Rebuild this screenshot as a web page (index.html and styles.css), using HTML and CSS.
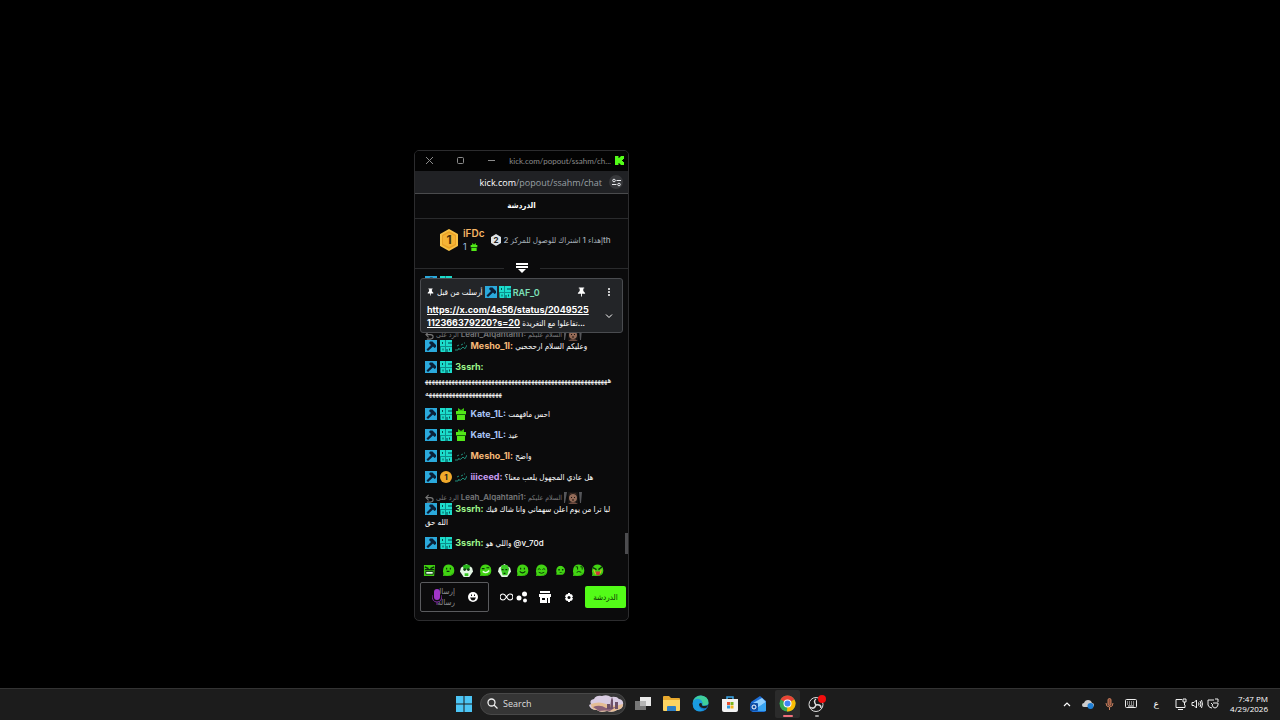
FILE: index.html
```
<!DOCTYPE html>
<html lang="en">
<head>
    <meta charset="UTF-8">
    <meta name="viewport" content="width=device-width, initial-scale=1.0">
    <title>Desktop</title>
    <link rel="stylesheet" href="styles.css">
</head>
<body>
    <!-- Shared icons -->
    <svg class="sprite" aria-hidden="true">
        <symbol id="mod" viewBox="0 0 12 12">
            <rect width="12" height="12" fill="#2ba9dc"/>
            <path d="M5 1.500h2.500L11 5v2L9.500 8 8 6.500 3 11 1.500 9.500 6 5 4 3z" fill="#0b2038"/>
        </symbol>
        <symbol id="og" viewBox="0 0 12 12">
            <rect width="12" height="12" rx="1" fill="#0c8f8c"/>
            <path d="M0 0h5v6H0zM6 0h6v2H8v2h4v2H6zM1 7h4v5H1zM6 7h6v5H8V9H6z" fill="#1cdccb"/>
            <path d="M2 2h1v2H2zM2.500 8.500h1v2h-1zM9 8.500h1v2H9z" fill="#04504f"/>
        </symbol>
        <symbol id="gift" viewBox="0 0 12 12">
            <path d="M1 3h10v3H1zM2 7h8v5H2z" fill="#53e818"/>
            <path d="M3 0l3 2 3-2v3H3z" fill="#3cc40e"/>
            <path d="M1 6h10v1H1z" fill="#146a08"/>
        </symbol>
        <symbol id="sub" viewBox="0 0 12 12">
            <path d="M0 10h3l1-2M4 9q2 1 3-1t2 0 2-1l1-2M2 6l2-1M6 5l2-1M9 3h1" fill="none" stroke="#1f8a78" stroke-width="1"/>
        </symbol>
        <symbol id="pin" viewBox="0 0 10 10">
            <path d="M2 0h6v1H7v3l2 2v1H5.500v3h-1V7H1V6l2-2V1H2z" fill="#fff"/>
        </symbol>
        <symbol id="reply" viewBox="0 0 10 10">
            <path d="M4 1L1 4l3 3M1 4h5q3 0 3 2.500T6 9H2" fill="none" stroke="#777" stroke-width="1.200"/>
        </symbol>
        <symbol id="curtain" viewBox="0 0 18 12">
            <path d="M0 0h3L1 11H0zM15 0h3l-1 11h-1z" fill="#55565a"/>
            <path d="M4 0h10v11H4z" fill="#161413"/>
            <circle cx="9" cy="6" r="4" fill="#936a57"/>
            <path d="M5 4q4-5 8 0l-1-3H6z" fill="#3b2a24"/>
            <path d="M7 5.500h1M10 5.500h1M8 8h2" stroke="#1c100d"/>
            <path d="M4 12q5-4 10 0z" fill="#6e4c40"/>
        </symbol>
        <symbol id="blob" viewBox="0 0 14 14">
            <path d="M3 2q4-3 8 0 3 2 2 7-1 4-6 4H1q1-2 0-5 0-4 2-6z" fill="#42d413"/>
            <path d="M3 12q6 2 9-3-1 4-5 4H1z" fill="#2a9d0a"/>
        </symbol>
    </svg>

    <main class="desktop">
        <section class="window">
            <header class="titlebar">
                <button aria-label="Close"><svg width="9" height="9" viewBox="0 0 9 9"><path d="M1 1l7 7M8 1L1 8"/></svg></button>
                <button aria-label="Maximize"><svg width="9" height="9" viewBox="0 0 9 9"><rect x="1.500" y="1.500" width="6" height="6" rx="1"/></svg></button>
                <button aria-label="Minimize"><svg width="9" height="9" viewBox="0 0 9 9"><path d="M1 4.500h7"/></svg></button>
                <span class="title">kick.com/popout/ssahm/ch...</span>
                <svg width="9" height="9" viewBox="0 0 9 9"><path d="M0 0h3.500v2h1V1h1V0H9v3H8v1H7v1h1v1h1v3H5.500V8h-1V7h-1v2H0z" fill="#53fc18"/></svg>
            </header>
            <div class="address">
                <span class="url"><b>kick.com</b>/popout/ssahm/chat</span>
                <button class="site" aria-label="Site information">
                    <svg width="9" height="9" viewBox="0 0 9 9" fill="none" stroke="#e8eaed"><circle cx="2" cy="2.500" r="1.300"/><path d="M4.500 2.500H9M0 6.500h4.500"/><circle cx="7" cy="6.500" r="1.300"/></svg>
                </button>
            </div>
            <h1 class="chat-title" lang="ar">الدردشة</h1>

            <div class="leaders">
                <svg width="20" height="22" viewBox="0 0 20 22">
                    <path d="M10 1l8 4.500v11L10 21l-8-4.500v-11z" fill="#e9a227" stroke="#f7c146" stroke-width="2" stroke-linejoin="round"/>
                    <path d="M10 4l6 3v8l-6 3-6-3V7z" fill="#f5b335"/>
                    <text x="10" y="15" class="rank">1</text>
                </svg>
                <div class="leader">
                    <strong>iFDc</strong>
                    <span>1 <svg width="8" height="8"><use href="#gift"/></svg></span>
                </div>
                <svg class="medal" width="10" height="12" viewBox="0 0 10 12">
                    <path d="M5 0l5 3v6l-5 3-5-3V3z" fill="#dfe3e6"/>
                    <text x="5" y="9" class="rank small">2</text>
                </svg>
                <p class="goal" dir="rtl" lang="ar">thإهداء 1 اشتراك للوصول للمركز 2</p>
            </div>
            <div class="divider">
                <button aria-label="Expand">
                    <svg width="12" height="10" viewBox="0 0 12 10"><path d="M0 0h12v2H0zM0 3h12v2H0zM2 6h8L6 10z" fill="#fff"/></svg>
                </button>
            </div>

            <div class="chat">
                <aside class="pinned">
                    <div class="pinned-top">
                        <svg width="7" height="8"><use href="#pin"/></svg>
                        <span class="by" lang="ar">أرسلت من قبل</span>
                        <svg class="badge"><use href="#mod"/></svg>
                        <svg class="badge"><use href="#og"/></svg>
                        <strong>RAF_0</strong>
                        <button class="unpin" aria-label="Unpin"><svg width="9" height="10"><use href="#pin"/></svg></button>
                        <button aria-label="More"><svg width="8" height="8" viewBox="0 0 8 8" fill="#fff"><circle cx="4" cy="1" r="1"/><circle cx="4" cy="4" r="1"/><circle cx="4" cy="7" r="1"/></svg></button>
                    </div>
                    <div class="pinned-body">
                        <p><a href="https://x.com/4e56/status/2049525112366379220?s=20">https://x.com/4e56/status/2049525112366379220?s=20</a> <span lang="ar">تفاعلوا مع التغريدة...</span></p>
                        <button aria-label="Show more"><svg width="8" height="8" viewBox="0 0 8 8"><path d="M1 2.500l3 3 3-3" fill="none" stroke="#fff"/></svg></button>
                    </div>
                </aside>

                <ul class="messages">
                    <li>
                        <svg class="badge"><use href="#mod"/></svg>
                        <svg class="badge"><use href="#og"/></svg>
                    </li>
                    <li class="gap"></li>
                    <li>
                        <div class="reply"><svg width="9" height="9"><use href="#reply"/></svg> الرد على <b>Leah_Alqahtani1:</b> السلام عليكم <svg width="18" height="12"><use href="#curtain"/></svg></div>
                        <svg class="badge"><use href="#mod"/></svg>
                        <svg class="badge"><use href="#og"/></svg>
                        <svg class="badge"><use href="#sub"/></svg>
                        <b class="orange">Mesho_1l:</b> وعليكم السلام ارحححبي
                    </li>
                    <li>
                        <svg class="badge"><use href="#mod"/></svg>
                        <svg class="badge"><use href="#og"/></svg>
                        <b class="green">3ssrh:</b>
                        <span class="laugh">ههههههههههههههههههههههههههههههههههههههههههههههههههههههههههههههههههههههههههههههه</span>
                    </li>
                    <li>
                        <svg class="badge"><use href="#mod"/></svg>
                        <svg class="badge"><use href="#og"/></svg>
                        <svg class="badge"><use href="#gift"/></svg>
                        <b class="blue">Kate_1L:</b> احس مافهمت
                    </li>
                    <li>
                        <svg class="badge"><use href="#mod"/></svg>
                        <svg class="badge"><use href="#og"/></svg>
                        <svg class="badge"><use href="#gift"/></svg>
                        <b class="blue">Kate_1L:</b> عيد
                    </li>
                    <li>
                        <svg class="badge"><use href="#mod"/></svg>
                        <svg class="badge"><use href="#og"/></svg>
                        <svg class="badge"><use href="#sub"/></svg>
                        <b class="orange">Mesho_1l:</b> واضح
                    </li>
                    <li>
                        <svg class="badge"><use href="#mod"/></svg>
                        <svg class="badge" viewBox="0 0 12 12"><circle cx="6" cy="6" r="6" fill="#f0a92b"/><text x="6" y="9" class="rank small">1</text></svg>
                        <svg class="badge"><use href="#sub"/></svg>
                        <b class="purple">iiiceed:</b> هل عادي المجهول يلعب معنا؟
                    </li>
                    <li>
                        <div class="reply"><svg width="9" height="9"><use href="#reply"/></svg> الرد على <b>Leah_Alqahtani1:</b> السلام عليكم <svg width="18" height="12"><use href="#curtain"/></svg></div>
                        <svg class="badge"><use href="#mod"/></svg>
                        <svg class="badge"><use href="#og"/></svg>
                        <b class="green">3ssrh:</b> لبا ترا من يوم اعلن سهماني وانا شاك فيك الله حق
                    </li>
                    <li>
                        <svg class="badge"><use href="#mod"/></svg>
                        <svg class="badge"><use href="#og"/></svg>
                        <b class="green">3ssrh:</b> واللي هو <span dir="ltr">@v_70d</span>
                    </li>
                </ul>
                <div class="thumb"></div>
            </div>

            <div class="emotes">
                <button aria-label="Angry"><svg viewBox="0 0 14 14"><path d="M1 1h12l-1 12H1z" fill="#3fd010"/><path d="M2 3l4 2M12 3L8 5M2 6h10" stroke="#08280a" stroke-width="1.500"/><path d="M3 8h8v3H3z" fill="#eaffea" stroke="#08280a"/></svg></button>
                <button aria-label="Thinking"><svg viewBox="0 0 14 14"><use href="#blob"/><path d="M5 4v2M9 4v2M5 8h3" stroke="#0a3307" stroke-width="1.200"/></svg></button>
                <button aria-label="Shock"><svg viewBox="0 0 14 14"><path d="M7 0l6 4 1 4-4 6H4L0 8l1-4z" fill="#e4f7e4"/><path d="M3 2q4-3 8 0l-1 4H4z" fill="#27b51a"/><circle cx="5" cy="6" r="1.500" fill="#123f16"/><circle cx="9" cy="6" r="1.500" fill="#123f16"/><path d="M5 10h4v3H5z" fill="#35c721"/></svg></button>
                <button aria-label="Smirk"><svg viewBox="0 0 14 14"><use href="#blob"/><path d="M3 5h3M8 4h3" stroke="#0a3307" stroke-width="1.200"/><path d="M4 8q4 3 7-1" fill="none" stroke="#eaffea" stroke-width="1.500"/></svg></button>
                <button aria-label="Cry"><svg viewBox="0 0 14 14"><path d="M7 0l6 4 1 4-4 6H4L0 8l1-4z" fill="#e4f7e4"/><path d="M4 1h6l2 4-2 7H5L3 5z" fill="#3ccb25"/><path d="M4 6h2M8 6h2M6 10h2" stroke="#0a3307" stroke-width="1.400"/></svg></button>
                <button aria-label="Smile"><svg viewBox="0 0 14 14"><use href="#blob"/><path d="M5 4v2M9 4v2M4 8q3 3 6 0" fill="none" stroke="#0a3307" stroke-width="1.200"/></svg></button>
                <button aria-label="Content"><svg viewBox="0 0 14 14"><use href="#blob"/><path d="M3 6q1.500-2 3 0M8 6q1.500-2 3 0M4 9q3 2 6 0" fill="none" stroke="#0a3307"/></svg></button>
                <button aria-label="Small"><svg viewBox="-2 -2 18 18"><use href="#blob" width="14" height="14"/><path d="M4 5h2v2H4zM9 5h2v2H9zM5 9q2 2 5 0" fill="#0a3307"/></svg></button>
                <button aria-label="Hmm"><svg viewBox="0 0 14 14"><use href="#blob"/><path d="M4 3h2v3M9 3h2v3M5 9q2-2 5 0" fill="none" stroke="#0a3307"/></svg></button>
                <button aria-label="Laugh"><svg viewBox="0 0 14 14"><use href="#blob"/><path d="M2 4l4 2M12 3L8 6" stroke="#0a3307" stroke-width="1.500"/><path d="M5 8h5l-1 4H6z" fill="#d3323c"/><path d="M3 6l2 5M11 6l-1 4" stroke="#e0b02a" stroke-width="1.200"/></svg></button>
            </div>

            <form class="composer">
                <div class="field">
                    <svg class="voice" width="10" height="16" viewBox="0 0 10 16"><rect x="2" y="0" width="6" height="11" rx="3" fill="#a035c8"/><path d="M0 6q0 7 5 7t5-7M5 13v3" fill="none" stroke="#7c2a9c"/></svg>
                    <textarea dir="rtl" lang="ar" placeholder="إرسال رسالة" aria-label="إرسال رسالة"></textarea>
                    <button type="button" aria-label="Emotes"><svg width="10" height="10" viewBox="0 0 10 10"><circle cx="5" cy="5" r="5" fill="#fff"/><path d="M3 2.500h1v1.500H3zM6 2.500h1v1.500H6zM2 5.500h6q-1 3-3 3t-3-3z" fill="#111"/></svg></button>
                </div>
                <button type="button" aria-label="Loop"><svg width="13" height="8" viewBox="0 0 13 8"><path d="M6.500 4C5 1.500 4 1 3 1a3 3 0 0 0 0 6c1 0 2-.5 3.500-3S9 1 10 1a3 3 0 0 1 0 6c-1 0-2-.5-3.500-3z" fill="none" stroke="#fff" stroke-width="1.200"/></svg></button>
                <button type="button" aria-label="Points"><svg width="12" height="12" viewBox="0 0 12 12" fill="#fff"><circle cx="8.500" cy="3" r="2.500"/><circle cx="3" cy="7" r="2.500"/><circle cx="9" cy="9.500" r="2"/></svg></button>
                <button type="button" class="shop" aria-label="Store"><svg width="12" height="12" viewBox="0 0 12 12"><path d="M1 0h10v2H1zM0 3h12v3h-1v6H1V6H0z" fill="#fff"/><path d="M3 7h3v2H3zM8 7h1v5H8z" fill="#0b0b0c"/></svg></button>
                <button type="button" class="gear" aria-label="Settings"><svg width="8" height="9" viewBox="0 0 8 9"><path d="M3 0h2v1l2 .5 1 2-1 1 1 1-1 2L5 8v1H3V8l-2-.5-1-2 1-1-1-1 1-2L3 1z" fill="#fff"/><circle cx="4" cy="4.500" r="1.500" fill="#0b0b0c"/></svg></button>
                <button type="submit" class="send" lang="ar">الدردشة</button>
            </form>
        </section>
    </main>

    <footer class="taskbar">
        <nav class="apps">
            <button aria-label="Start"><svg width="16" height="16" viewBox="0 0 16 16"><path d="M0 0h7.500v7.500H0zM8.500 0H16v7.500H8.500zM0 8.500h7.500V16H0zM8.500 8.500H16V16H8.500z" fill="#4cc5f5"/></svg></button>
            <label class="search">
                <svg width="11" height="11" viewBox="0 0 11 11" fill="none" stroke="#eee" stroke-width="1.300"><circle cx="4.500" cy="4.500" r="3.500"/><path d="M7 7l3.500 3.500"/></svg>
                <input type="text" placeholder="Search">
                <svg width="35" height="18" viewBox="0 0 35 18">
                    <path d="M2 9Q0 5 5 4q2-4 8-3 5-2 9 1 6-1 8 2 5 1 4 6 0 4-6 5-4 3-10 1-7 2-10-1-7 0-8-5z" fill="#d9cce2"/>
                    <path d="M2 9q8-3 15 0t17 0q0 5-6 6-4 3-10 1-7 2-10-1-6 0-6-6z" fill="#e5bd94"/>
                    <path d="M4 12q7-3 13 1l10-1-6 4q-5-1-11 0z" fill="#8a6178"/>
                    <path d="M22 5l1-3 1 3v9h-3zM26 7h3v7h-3zM18 9h3v5h-3z" fill="#6d5068"/>
                </svg>
            </label>
            <button aria-label="Task view"><svg width="16" height="14" viewBox="0 0 16 14"><path d="M0 4h11v9H0z" fill="#777"/><path d="M5 0h11v9H5z" fill="#e8e8e8"/><path d="M5 4h6v5H5z" fill="#b5b5b5"/></svg></button>
            <button aria-label="File Explorer"><svg width="17" height="15" viewBox="0 0 17 15"><path d="M0 1q0-1 1-1h5l2 2h8q1 0 1 1v11H0z" fill="#e8a92e"/><path d="M0 4h17v10q0 1-1 1H1q-1 0-1-1z" fill="#fcd462"/><path d="M4 15v-4q0-1 1-1h7q1 0 1 1v4z" fill="#2c7fc6"/></svg></button>
            <button aria-label="Edge"><svg width="17" height="17" viewBox="0 0 17 17"><circle cx="8.500" cy="8.500" r="8" fill="#1577c9"/><path d="M1 7q1-6 8-6.500 7 .5 7.500 7 0 3-4 3-3 0-2-2 0-3-4-3-4 0-5.500 1.500z" fill="#3fcf9b"/><path d="M1 7q2-4 6-3 4 1 3 5-2-1-3 1 0 4 5 5-3 2-7 1Q0 14 1 7z" fill="#1a9be0"/><path d="M7 9q2-2 3 0-1 2 2 2 3 0 4-1-1 4-5 3-4-1-4-4z" fill="#1c1c1c"/></svg></button>
            <button aria-label="Store"><svg width="16" height="16" viewBox="0 0 16 16"><path d="M5 4V1h6v3" fill="none" stroke="#3ba7e8" stroke-width="1.500"/><path d="M0 3h16v11q0 2-2 2H2q-2 0-2-2z" fill="#f2f2f2"/><path d="M5 6h3v3H5z" fill="#e8502f"/><path d="M8.500 6h3v3h-3z" fill="#7ab51d"/><path d="M5 9.500h3v3H5z" fill="#2c9be0"/><path d="M8.500 9.500h3v3h-3z" fill="#f2b31b"/></svg></button>
            <button aria-label="Outlook"><svg width="17" height="16" viewBox="0 0 17 16"><path d="M1 6l9-6 6 5v9q0 2-2 2H3q-2 0-2-2z" fill="#1d6fd8"/><path d="M3 7l9-5 4 4-8 6z" fill="#8fd0ff"/><path d="M2 15L16 6v9z" fill="#38a4f2"/><rect y="7" width="8" height="8" rx="1" fill="#0f4fa6"/><circle cx="4" cy="11" r="2" fill="none" stroke="#fff"/></svg></button>
            <button class="active" aria-label="Chrome"><svg width="17" height="17" viewBox="0 0 17 17"><circle cx="8.500" cy="8.500" r="8" fill="#35a853"/><path d="M8.500 8.500L1.600 4.500A8 8 0 0 1 15.400 4.500z" fill="#e94335"/><path d="M8.500 8.500l6.900-4A8 8 0 0 1 8 16.500z" fill="#fbbc05"/><circle cx="8.500" cy="8.500" r="4" fill="#fff"/><circle cx="8.500" cy="8.500" r="3" fill="#4285f4"/></svg></button>
            <button class="open" aria-label="OBS Studio"><svg width="18" height="18" viewBox="0 0 18 18"><circle cx="8" cy="9.500" r="7" fill="#1a1a1a" stroke="#ddd"/><path d="M8 10Q5 6 8 4M8 10q5-1 5 3M8 10q-2 5-6 2" fill="none" stroke="#ddd" stroke-width="1.500"/><circle cx="14" cy="4" r="4" fill="#f20d0d"/></svg></button>
        </nav>
        <div class="tray">
            <button aria-label="Hidden icons"><svg width="8" height="6" viewBox="0 0 8 6"><path d="M1 5l3-3 3 3" fill="none" stroke="#fff" stroke-width="1.200"/></svg></button>
            <button aria-label="OneDrive"><svg width="12" height="10" viewBox="0 0 12 10"><path d="M2 8Q0 8 0 6t2-2q1-3 4-3t4 3q2 0 2 2t-2 2z" fill="#ccc"/><circle cx="8.500" cy="7" r="3" fill="#1e7fd6"/></svg></button>
            <button aria-label="Microphone"><svg width="9" height="12" viewBox="0 0 9 12" fill="none" stroke="#c9805f"><rect x="3" y=".5" width="3" height="7" rx="1.500" fill="#8b4c38"/><path d="M1 5q0 4 3.500 4T8 5M4.500 9v3"/></svg></button>
            <button aria-label="Touch keyboard"><svg width="12" height="9" viewBox="0 0 12 9" fill="none" stroke="#eee"><rect x=".5" y=".5" width="11" height="8" rx="1"/><path d="M2 3h8M2 5h8" stroke-dasharray="1 1"/><path d="M3 7h6"/></svg></button>
            <button class="lang" lang="ar">ع</button>
            <button class="quick" aria-label="Quick settings">
                <svg width="12" height="12" viewBox="0 0 12 12" fill="none" stroke="#eee"><path d="M7 1.500H1v8h9V7M3 11.500h5"/><path d="M8 1h3v3H8zM9.500 4v3"/></svg>
                <svg width="12" height="12" viewBox="0 0 12 12" fill="none" stroke="#eee"><path d="M1 4.500h2l2.500-2.500v8L3 7.500H1zM7.500 4.500q1 1.500 0 3M9 3q2 3 0 6M10.500 2q2 4 0 8"/></svg>
                <svg width="12" height="12" viewBox="0 0 12 12" fill="none" stroke="#eee"><path d="M7 2H1v5q1 3 4 3M4 5l2 2M6 5h5v2q-1 3-3 3T5 7M8 1h3v3"/></svg>
            </button>
            <button class="clock"><time>7:47 PM</time><time>4/29/2026</time></button>
        </div>
    </footer>
</body>
</html>
```

FILE: styles.css
```
:root {
    --kick-green: #53fc18;
    --panel: #0b0b0c;
    --line: #2a2b2d;
    --latin: Inter, "DejaVu Sans Condensed", "DejaVu Sans", sans-serif;
    --system: "Open Sans", "DejaVu Sans", sans-serif;
}

* {
    margin: 0;
    padding: 0;
    box-sizing: border-box;
}

body {
    height: 100vh;
    display: flex;
    flex-direction: column;
    background: #000;
    color: #fff;
    font-family: var(--latin);
    font-size: 9px;
    overflow: hidden;
}

button {
    display: flex;
    align-items: center;
    justify-content: center;
    background: none;
    border: none;
    color: inherit;
    font: inherit;
}

svg {
    flex-shrink: 0;
}

.sprite {
    display: none;
}

.desktop {
    position: relative;
    flex: 1;
}

/* Popout window */
.window {
    position: absolute;
    left: 414px;
    top: 150px;
    width: 215px;
    height: 471px;
    display: flex;
    flex-direction: column;
    background: var(--panel);
    border: 1px solid #2c2c2e;
    border-radius: 5px;
    overflow: hidden;
}

.titlebar {
    display: flex;
    align-items: center;
    gap: 22px;
    height: 20px;
    padding: 0 4px 1px 10px;
    background: #030303;
    color: #8c8c8c;
    font-family: Lato, sans-serif;
    font-size: 8px;
}

.titlebar button svg {
    fill: none;
    stroke: #8c8c8c;
}

.titlebar .title {
    flex: 1;
    margin: 0 -18px 0 -9px;
    text-align: right;
    white-space: nowrap;
}

.address {
    display: flex;
    align-items: center;
    justify-content: flex-end;
    gap: 7px;
    height: 23px;
    padding-right: 5px;
    background: #202124;
    border-bottom: 1px solid #4a4b4d;
    color: #9aa0a6;
    font-family: var(--system);
    font-size: 9px;
}

.address b {
    color: #fff;
    font-weight: 500;
}

.site {
    width: 14px;
    height: 14px;
    background: #37383b;
    border-radius: 50%;
}

.chat-title {
    padding-bottom: 2px;
    line-height: 22px;
    border-bottom: 1px solid var(--line);
    font-size: 8px;
    text-align: center;
}

/* Leaderboard */
.leaders {
    display: flex;
    align-items: center;
    height: 44px;
    padding: 0 0 2px 24px;
}

.rank {
    fill: #4a3208;
    font-size: 12px;
    font-weight: 700;
    text-anchor: middle;
}

.rank.small {
    fill: #222;
    font-size: 8px;
}

.leader {
    margin: 0 6px 0 4px;
    line-height: 13px;
}

.leader strong {
    display: block;
    color: #f5b565;
    font-size: 10px;
    font-weight: 600;
}

.leader span {
    display: flex;
    align-items: center;
    gap: 3px;
    color: #9fc3e0;
}

.goal {
    margin-left: 3px;
    color: #a6b0b8;
    font-size: 8px;
    font-weight: 500;
    white-space: nowrap;
}

.divider {
    display: flex;
    align-items: center;
    gap: 12px;
    height: 10px;
}

.divider::before,
.divider::after {
    content: '';
    flex: 1;
    border-top: 1px solid var(--line);
}

/* Chat */
.chat {
    position: relative;
    flex: 1;
    min-height: 0;
    display: flex;
    flex-direction: column;
    justify-content: flex-end;
    overflow: hidden;
}

.messages {
    list-style: none;
    padding: 0 14px 10px 10px;
}

.messages li {
    padding: 4px 0;
    line-height: 13px;
    font-size: 8px;
    font-weight: 500;
}

.messages .gap {
    height: 32px;
}

.messages b {
    font-size: 9px;
    line-height: 11px;
}

.badge {
    width: 12px;
    height: 12px;
    vertical-align: top;
}

.messages .badge {
    margin-right: 1px;
}

.orange { color: #f5b877; }
.green { color: #9df58b; }
.blue { color: #a9c4f5; }
.purple { color: #c79bf0; }

.laugh {
    display: block;
    overflow-wrap: anywhere;
}

.messages .reply {
    height: 11px;
    color: #77787a;
    font-size: 7px;
    line-height: 9px;
    white-space: nowrap;
}

.reply svg {
    vertical-align: middle;
}

.messages .reply b {
    font-size: 8px;
    font-weight: 600;
    line-height: 8px;
}

.thumb {
    position: absolute;
    right: 0;
    bottom: 10px;
    width: 3px;
    height: 21px;
    background: #4c4c4f;
}

.pinned {
    position: absolute;
    top: 5px;
    left: 5px;
    right: 5px;
    z-index: 1;
    padding: 6px 9px 3px 6px;
    background: #232528;
    border: 1px solid #4a4c50;
    border-radius: 3px;
}

.pinned-top {
    display: flex;
    align-items: center;
    gap: 2px;
    height: 14px;
}

.pinned-top .by {
    margin-left: 1px;
    font-size: 8px;
    font-weight: 500;
    white-space: nowrap;
}

.pinned-top strong {
    color: #7ce0b8;
    font-weight: 600;
}

.pinned-top .unpin {
    margin: 0 17px 0 auto;
}

.pinned-body {
    display: flex;
    align-items: center;
    gap: 14px;
    margin-top: 4px;
}

.pinned-body p {
    flex: 1;
    font-size: 9px;
    font-weight: 700;
    line-height: 13px;
    word-break: break-all;
}

.pinned-body a {
    color: #fff;
}

.pinned-body span {
    font-size: 8px;
    font-weight: 500;
    line-height: 11px;
    white-space: nowrap;
}

/* Emotes and composer */
.emotes {
    display: flex;
    justify-content: space-between;
    padding: 0 24px 0 8px;
}

.emotes svg {
    width: 13px;
    height: 13px;
}

.composer {
    display: flex;
    align-items: center;
    gap: 3px;
    padding: 5px 2px 8px 5px;
}

.field {
    position: relative;
    display: flex;
    align-items: center;
    gap: 13px;
    width: 69px;
    height: 30px;
    margin-right: 8px;
    padding-left: 10px;
    border: 1px solid #5a5b5e;
    border-radius: 2px;
}

.field textarea {
    width: 24px;
    height: 22px;
    background: none;
    border: none;
    resize: none;
    overflow: hidden;
    color: #fff;
    font-family: var(--latin);
    font-size: 8px;
    line-height: 11px;
}

.field textarea::placeholder {
    color: #8c8d90;
}

.voice {
    position: absolute;
    left: 11px;
    top: 6px;
}

.shop {
    margin-left: 8px;
}

.gear {
    margin: 0 9px 0 11px;
}

.send {
    flex: 1;
    height: 22px;
    background: var(--kick-green);
    border-radius: 2px;
    color: #0b2a04;
    font-size: 8px;
    font-weight: 500;
}

/* Taskbar */
.taskbar {
    display: grid;
    grid-template-columns: 1fr auto 1fr;
    align-items: center;
    height: 32px;
    padding-bottom: 2px;
    background: #1c1c1c;
    border-top: 1px solid #333;
    font-family: var(--system);
}

.apps {
    grid-column: 2;
    display: flex;
    align-items: center;
    gap: 4px;
}

.apps button {
    position: relative;
    width: 25px;
    height: 28px;
    border-radius: 2px;
}

.search {
    display: flex;
    align-items: center;
    gap: 5px;
    width: 146px;
    height: 22px;
    padding: 0 1px 0 6px;
    background: #353535;
    border: 1px solid #484848;
    border-radius: 11px;
}

.search input {
    flex: 1;
    min-width: 0;
    background: none;
    border: none;
    color: #ddd;
    font: 9px var(--system);
}

.search input::placeholder {
    color: #ddd;
}

.apps .active {
    background: #2b2b2b;
}

.apps .active::after,
.apps .open::after {
    content: '';
    position: absolute;
    bottom: 1px;
    width: 4px;
    height: 2px;
    background: #999;
    border-radius: 1px;
}

.apps .active::after {
    width: 10px;
    background: #f0707c;
}

.tray {
    display: flex;
    align-items: center;
    justify-content: flex-end;
    gap: 11px;
    padding-right: 12px;
}

.tray .lang {
    width: 14px;
    margin: 0 1px;
}

.quick {
    gap: 4px;
}

.clock {
    flex-direction: column;
    align-items: flex-end;
    font-size: 8px;
    line-height: 10px;
}
```
